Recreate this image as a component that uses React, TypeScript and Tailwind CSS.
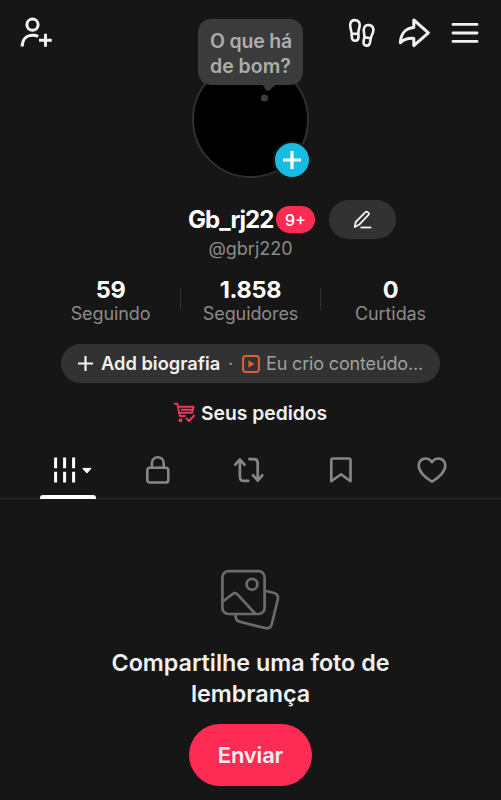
import type { ReactNode } from "react";

const stats = [
  { value: "59", label: "Seguindo" },
  { value: "1.858", label: "Seguidores" },
  { value: "0", label: "Curtidas" },
];

const AddFriendIcon = () => (
  <svg width="36" height="34" viewBox="0 0 36 34" fill="none" stroke="currentColor" strokeWidth="3">
    <circle cx="14.5" cy="8.7" r="5.6" />
    <path d="M4.2 30.5C4.2 23.5 8.2 19.2 14.6 19.2c2.3 0 4 .4 5.6 1.3" />
    <path d="M21 24.3h12.8M27.5 17.8v13" />
  </svg>
);

const FootprintsIcon = () => (
  <svg width="30" height="32" viewBox="0 0 30 32" fill="none" stroke="currentColor" strokeWidth="2.6" strokeLinejoin="round">
    <path d="M4.6 16.2C4.1 12.6 3 10.6 3.2 7.8 3.4 4.9 5.3 3.1 8 3.1c3.1 0 4.9 2.3 4.7 5.3-.2 2.7-1.4 4.5-1.3 7.8l.1 3.8c0 2.5-1.200 3.800-3.300 3.800S4.900 22.500 4.800 20Z" />
    <path d="M4.8 16.8h6.4" />
    <path d="M17.3 20.3c.5-3.400-1-5.300-.5-8.100.5-2.900 2.800-4.500 5.500-4.100 2.900.4 4.500 2.900 4 6-.4 2.600-1.900 4-2.600 7.400l-.7 3.900c-.5 2.400-1.900 3.600-3.900 3.200-2-.3-2.900-1.900-2.500-4.300Z" />
    <path d="M17.3 20.2l6.3 1.1" />
  </svg>
);

const ShareIcon = () => (
  <svg width="34" height="32" viewBox="0 0 34 32" fill="none" stroke="currentColor" strokeWidth="3" strokeLinejoin="round">
    <path d="M3.4 25.6C3.8 17 8.6 11.2 16.8 10.6V3l14.6 12.8-14.6 12.8v-7.2c-5.6-.3-10 .8-13.4 4.2Z" />
  </svg>
);

const MenuIcon = () => (
  <svg width="28" height="24" viewBox="0 0 28 24" stroke="currentColor" strokeWidth="2.9" strokeLinecap="round">
    <path d="M2 3.4h24M2 12h24M2 20.4h24" />
  </svg>
);

const PencilIcon = () => (
  <svg width="20" height="20" viewBox="0 0 20 20" fill="none" stroke="currentColor" strokeWidth="1.8" strokeLinejoin="round">
    <path d="M1.7 17l1-5L12.2 2.400c.9-.9 2.100-.9 2.900-.1.9.8.9 2 .1 2.900L6 14.800 1.700 17Z" />
    <path d="M7.500 17.500h10.800" />
  </svg>
);

const CartIcon = () => (
  <svg width="24" height="22" viewBox="0 0 24 22" fill="none" stroke="#e5395b" strokeWidth="2" strokeLinejoin="round">
    <path d="M1 1.7h3.3l2.6 12.4h5.6M4.8 4.8h15.7l-1.4 6H6.2M8 7.8h11" />
    <circle cx="7.5" cy="18.3" r="1" fill="#e5395b" />
    <path d="M13 16l3 3 5.6-6" />
  </svg>
);

const VideoBadgeIcon = () => (
  <svg width="18" height="18" viewBox="0 0 18 18" fill="none">
    <rect x="1.1" y="1.1" width="15.8" height="15.8" rx="2.6" stroke="#d9623b" strokeWidth="2" />
    <path d="M6.4 5.2v7.6L12.5 9Z" fill="#d9623b" />
  </svg>
);

const GridIcon = () => (
  <svg width="40" height="28" viewBox="0 0 40 28" fill="none" stroke="currentColor" strokeWidth="3">
    <path d="M3.6 1.5v10.8M12.6 1.5v10.8M21.6 1.5v10.8M3.6 15.7v10.8M12.6 15.7v10.8M21.6 15.7v10.8" />
    <path d="M30.8 12.4h8.2l-4.1 4.6Z" fill="currentColor" strokeWidth="1" strokeLinejoin="round" />
  </svg>
);

const LockIcon = () => (
  <svg width="26" height="30" viewBox="0 0 26 30" fill="none" stroke="currentColor" strokeWidth="2.6">
    <rect x="2.3" y="12.7" width="21" height="14.8" rx="2.6" />
    <path d="M6.9 12.5V8.1c0-3.5 2.5-5.9 5.9-5.9s5.9 2.4 5.9 5.9v4.4" />
  </svg>
);

const RepostIcon = () => (
  <svg width="32" height="28" viewBox="0 0 32 28" fill="none" stroke="currentColor" strokeWidth="2.7" strokeLinecap="round" strokeLinejoin="round">
    <path d="M2.3 8.7L6.9 3.5l4.6 5.2M6.9 4v17c0 2.6 1.4 3.9 3.9 3.9h4.4" />
    <path d="M29.3 19.3l-4.6 5.2-4.6-5.2M24.7 24V7c0-2.6-1.4-3.9-3.9-3.9h-4.4" />
  </svg>
);

const BookmarkIcon = () => (
  <svg width="24" height="28" viewBox="0 0 24 28" fill="none" stroke="currentColor" strokeWidth="2.6" strokeLinejoin="round">
    <path d="M2.3 4.2c0-1 .6-1.7 1.7-1.7h15.8c1 0 1.7.6 1.7 1.7v21L12 18.2l-9.7 7Z" />
  </svg>
);

const HeartIcon = () => (
  <svg width="30" height="28" viewBox="0 0 30 28" fill="none" stroke="currentColor" strokeWidth="2.6" strokeLinejoin="round">
    <path d="M15 6.2C13.4 3.7 11.2 2.5 8.6 2.5c-4 0-6.9 3-6.9 7 0 6.6 6.4 11.4 13.3 16.2 6.9-4.8 13.3-9.6 13.3-16.2 0-4-2.9-7-6.9-7-2.6 0-4.8 1.2-6.4 3.7Z" />
  </svg>
);

const PhotosIcon = () => (
  <svg width="60" height="62" viewBox="0 0 60 62" fill="none" stroke="currentColor" strokeWidth="2.7" strokeLinejoin="round">
    <rect x="2.4" y="2.2" width="42.2" height="42.8" rx="6" />
    <circle cx="32" cy="15.3" r="5.4" />
    <path d="M3.2 32.2L12.3 25.2c1.8-1.4 3.8-1.3 5.4.4L35.5 45" />
    <path d="M44.8 21.8l8.5 1.9c3.4.8 5.2 3.3 4.500 6.500l-6 24.800c-.8 3.200-3.500 4.700-6.800 4L19.900 52.800c-3-.8-4.600-3.300-4.300-7.200" />
  </svg>
);

const Tab = ({ children, active = false }: { children: ReactNode; active?: boolean }) => (
  <button className={`flex w-1/5 items-center justify-center ${active ? "pl-[10px] text-white" : "text-[#868686]"}`}>
    {children}
  </button>
);

export default function App() {
  return (
    <div className="h-[800px] w-[501px] overflow-hidden bg-[#161616] font-['Inter',sans-serif] text-[#f1f1f1]">
      <header className="flex h-[61px] items-start justify-between pl-[18px] pr-[22px] pt-4">
        <AddFriendIcon />
        <div className="flex pt-px">
          <FootprintsIcon />
          <div className="ml-5">
            <ShareIcon />
          </div>
          <div className="ml-5 pt-1">
            <MenuIcon />
          </div>
        </div>
      </header>

      {/* Avatar with status bubble */}
      <div className="relative mx-auto h-[117px] w-[117px] rounded-full border-2 border-[#303030] bg-black">
        <div className="absolute -top-[44px] left-[4px] h-[66px] w-[105px] rounded-[13px] bg-[#3b3b3b] pl-[12px] pt-[10px] text-[19.5px] font-semibold leading-[25px] text-[#adadad]">
          <p className="whitespace-nowrap tracking-[-0.2px]">O que há</p>
          <p className="whitespace-nowrap">de bom?</p>
          <svg className="absolute left-[62px] top-[65px]" width="20" height="18" viewBox="0 0 20 18" fill="#3b3b3b">
            <path d="M1 0c2 1 2.8 2 4 4.5 1.2 2.6 3.5 2.8 5.5 1C13 3 14.5 1.2 18 0Z" />
            <circle cx="4.5" cy="14" r="3.6" />
          </svg>
        </div>
        <div className="absolute left-[79px] top-[78px] flex h-[38px] w-[38px] items-center justify-center rounded-full border-2 border-[#161616] bg-[#18bce2]">
          <svg width="18" height="18" viewBox="0 0 18 18" stroke="white" strokeWidth="3.2">
            <path d="M0 9h18M9 0v18" />
          </svg>
        </div>
      </div>

      <div className="mt-[22px] flex h-[39px] items-center pl-[188px]">
        <h1 className="w-[88px] whitespace-nowrap text-[24px] font-bold tracking-[-1px] text-white">Gb_rj22</h1>
        <span className="flex h-[27px] w-[39px] items-center justify-center rounded-full bg-[#fe2c55] text-[16px] font-medium text-white">
          9+
        </span>
        <button className="ml-[14px] flex h-[39px] w-[67px] items-center justify-center rounded-full bg-[#323232]">
          <PencilIcon />
        </button>
      </div>
      <p className="text-center text-[18px] leading-5 text-[#8b8b8b]">@gbrj220</p>

      <div className="mx-auto mt-[18px] flex w-[420px]">
        {stats.map((stat, i) => (
          <div key={stat.label} className="relative w-[140px] text-center">
            <p className="text-[23.5px] font-bold leading-[25px] tracking-[-0.3px] text-white">{stat.value}</p>
            <p className="mt-px text-[18px] leading-[22px] tracking-[-0.1px] text-[#8b8b8b]">{stat.label}</p>
            {i > 0 && <span className="absolute -left-px top-[11px] h-[22px] w-px bg-[#303030]" />}
          </div>
        ))}
      </div>

      <div className="mx-auto mt-[19px] flex h-[39px] w-[379px] items-center rounded-full bg-[#323232] pl-[17px]">
        <svg width="15" height="15" viewBox="0 0 15 15" stroke="currentColor" strokeWidth="2.2">
          <path d="M0 7.5h15M7.5 0v15" />
        </svg>
        <span className="ml-2 w-[120px] whitespace-nowrap text-[18.3px] font-semibold">Add biografia</span>
        <span className="ml-[7px] w-[14px] text-[18px] text-[#a0a0a0]">·</span>
        <VideoBadgeIcon />
        <span className="ml-[6px] whitespace-nowrap text-[18px] tracking-[-0.16px] text-[#a0a0a0]">Eu crio conteúdo...</span>
      </div>

      <div className="mt-[18px] flex h-6 items-center pl-[173px]">
        <CartIcon />
        <span className="ml-1 whitespace-nowrap text-[19.3px] font-semibold">Seus pedidos</span>
      </div>

      <nav className="relative mt-[17px] flex h-[57px] border-b border-[#2c2c2c] pl-[21px] pr-[23px]">
        <Tab active>
          <GridIcon />
        </Tab>
        <Tab>
          <LockIcon />
        </Tab>
        <Tab>
          <RepostIcon />
        </Tab>
        <Tab>
          <BookmarkIcon />
        </Tab>
        <Tab>
          <HeartIcon />
        </Tab>
        <span className="absolute -bottom-px left-10 h-[4px] w-14 rounded-t-[3px] bg-white" />
      </nav>

      <main className="flex flex-col items-center pt-[70px]">
        <div className="mr-[2px] text-[#6c6c6c]">
          <PhotosIcon />
        </div>
        <h2 className="mt-[17px] w-[300px] text-center text-[23.3px] font-semibold leading-[30.5px]">
          Compartilhe uma foto de lembrança
        </h2>
        <button className="mt-[15px] h-[62px] w-[123px] rounded-full bg-[#fe2c55] text-[22px] font-semibold tracking-[-0.2px]">
          Enviar
        </button>
      </main>
    </div>
  );
}
